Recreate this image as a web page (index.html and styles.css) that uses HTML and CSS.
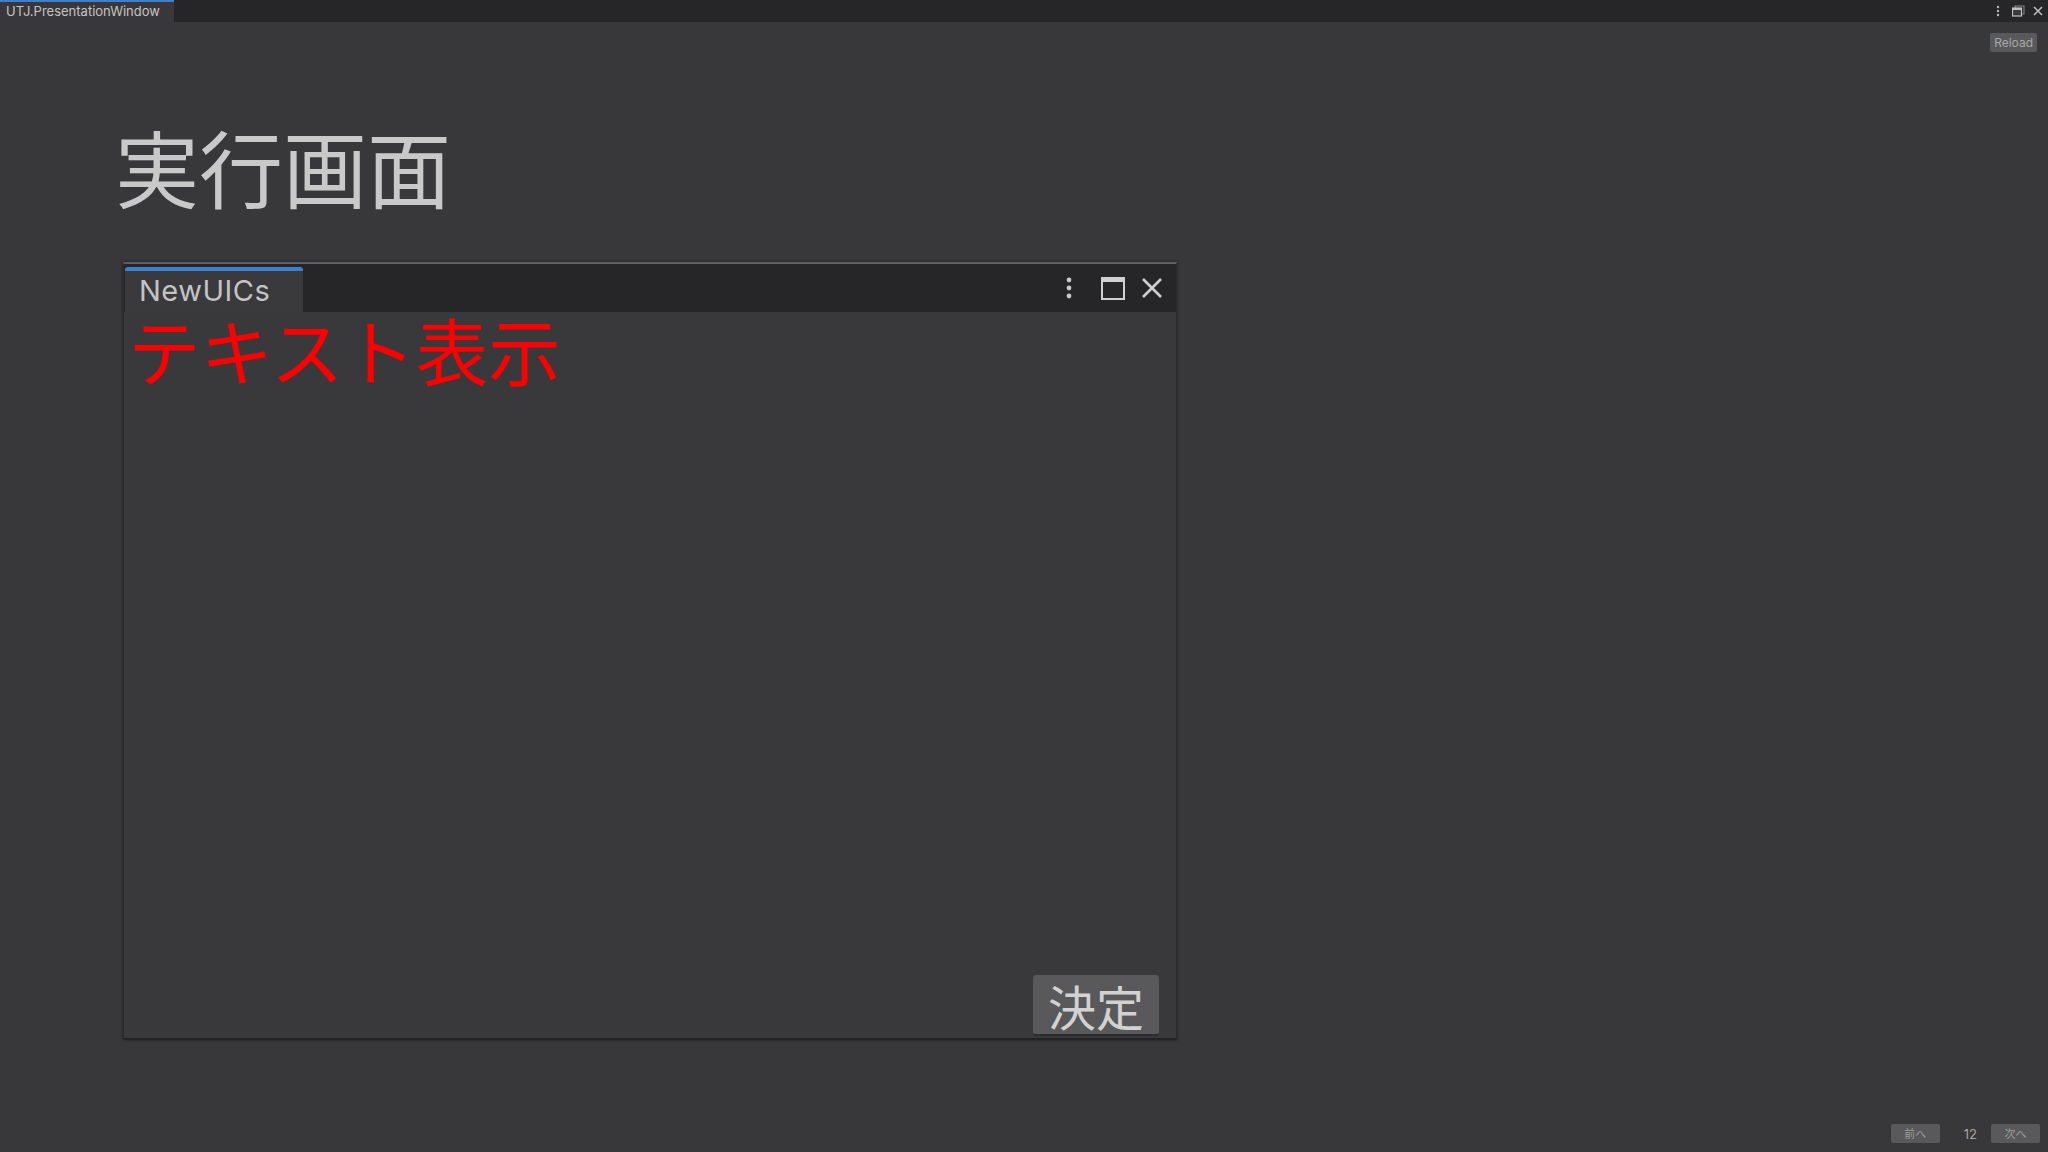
FILE: index.html
```html
<!DOCTYPE html>
<html lang="ja">
<head>
<meta charset="utf-8">
<title>UTJ.PresentationWindow</title>
<link rel="stylesheet" href="styles.css">
</head>
<body>
<div class="app">
  <div class="topbar">
    <div class="top-tab">UTJ.PresentationWindow</div>
    <div class="top-icons">
      <svg class="ico-dots" width="4" height="12" viewBox="0 0 4 12"><circle cx="2" cy="2" r="1.2" fill="#b8b8b8"/><circle cx="2" cy="6" r="1.2" fill="#b8b8b8"/><circle cx="2" cy="10" r="1.2" fill="#b8b8b8"/></svg>
      <svg class="ico-win" width="13" height="12" viewBox="0 0 13 12"><rect x="3" y="1" width="9" height="8" fill="none" stroke="#8a8a8a" stroke-width="1"/><rect x="0.5" y="3" width="9" height="8" fill="#3a3a3c" stroke="#c0c0c0" stroke-width="1.2"/><rect x="0.5" y="3" width="9" height="2" fill="#c0c0c0"/></svg>
      <svg class="ico-x" width="10" height="10" viewBox="0 0 10 10"><path d="M1 1 L9 9 M9 1 L1 9" stroke="#c0c0c0" stroke-width="1.5"/></svg>
    </div>
  </div>
  <div class="main">
    <div class="toolrow"><span class="small-btn">Reload</span></div>
    <h1 class="title">実行画面</h1>
    <div class="window">
      <div class="win-tabbar">
        <div class="win-tab">NewUICs</div>
        <div class="win-icons">
          <svg width="6" height="22" viewBox="0 0 6 22"><circle cx="3" cy="3" r="2.4" fill="#c8c8c8"/><circle cx="3" cy="11" r="2.4" fill="#c8c8c8"/><circle cx="3" cy="19" r="2.4" fill="#c8c8c8"/></svg>
          <svg width="24" height="23" viewBox="0 0 24 23"><rect x="1" y="1" width="22" height="21" fill="none" stroke="#d0d0d0" stroke-width="2"/><rect x="1" y="1" width="22" height="4" fill="#d0d0d0"/></svg>
          <svg width="22" height="22" viewBox="0 0 22 22"><path d="M2 2 L20 20 M20 2 L2 20" stroke="#d0d0d0" stroke-width="2.6"/></svg>
        </div>
      </div>
      <div class="win-body">
        <div class="red-text">テキスト表示</div>
        <button class="ok-btn">決定</button>
      </div>
    </div>
    <div class="pager">
      <span class="small-btn jp">前へ</span>
      <span class="page-num">12</span>
      <span class="small-btn jp">次へ</span>
    </div>
  </div>
</div>
</body>
</html>
```

FILE: styles.css
```css
html, body {
  margin: 0;
  padding: 0;
  background: #38383a;
  font-family: Inter, "Noto Sans", "Noto Sans CJK JP", sans-serif;
}
.app {
  width: 2048px;
  height: 1152px;
  display: flex;
  flex-direction: column;
  overflow: hidden;
}
.topbar {
  height: 22px;
  background: #262628;
  display: flex;
  align-items: stretch;
  justify-content: space-between;
  flex: none;
}
.top-tab {
  width: 168px;
  background: #38383a;
  border-top: 2px solid #3f7fd0;
  color: #c4c4c4;
  font-size: 13px;
  line-height: 19px;
  padding-left: 6px;
  white-space: nowrap;
}
.top-icons {
  display: flex;
  align-items: center;
  gap: 8px;
  padding-right: 5px;
}
.ico-dots { margin-right: 4px; }
.main {
  flex: 1;
  display: flex;
  flex-direction: column;
}
.toolrow {
  display: flex;
  justify-content: flex-end;
  padding: 11px 11px 0 0;
}
.small-btn {
  display: inline-block;
  height: 19px;
  line-height: 19px;
  padding: 0 4px;
  background: #59595b;
  color: #a8a8a8;
  font-size: 12px;
  border-radius: 2px;
  box-sizing: border-box;
}
.small-btn.jp {
  width: 49px;
  text-align: center;
  font-family: "Noto Sans CJK JP", sans-serif;
  font-size: 11px;
  color: #9c9c9c;
}
.title {
  margin: 72px 0 0 115px;
  font-family: "Noto Sans CJK JP", sans-serif;
  font-weight: 400;
  font-size: 84px;
  line-height: 84px;
  color: #c9c9c9;
  letter-spacing: 0;
}
.window {
  margin: 54px 0 0 123px;
  width: 1054px;
  height: 778px;
  box-sizing: border-box;
  border-top: 2px solid #5e5e60;
  border-bottom: 2px solid #222224;
  border-left: 1px solid #2a2a2c;
  border-right: 1px solid #2a2a2c;
  box-shadow: 0 0 3px rgba(0,0,0,0.45);
  display: flex;
  flex-direction: column;
  background: #39393b;
}
.win-tabbar {
  height: 48px;
  background: #262628;
  display: flex;
  align-items: flex-end;
  justify-content: space-between;
  flex: none;
}
.win-tab {
  margin-left: 1px;
  width: 178px;
  height: 45px;
  box-sizing: border-box;
  border-top: 4px solid #3f7fd0;
  border-radius: 3px 3px 0 0;
  background: #3a3a3c;
  color: #c4c4c4;
  font-size: 29px;
  line-height: 40px;
  padding-left: 14px;
  letter-spacing: 0.5px;
}
.win-icons {
  align-self: center;
  display: flex;
  align-items: center;
  gap: 0;
  padding-right: 13px;
}
.win-icons svg:nth-child(1) { margin-right: 29px; }
.win-icons svg:nth-child(2) { margin-right: 16px; }
.win-body {
  flex: 1;
  display: flex;
  flex-direction: column;
  padding: 1px 17px 2px 4px;
}
.red-text {
  font-family: "Noto Sans CJK JP", sans-serif;
  font-size: 72.5px;
  line-height: 72px;
  color: #ff0000;
}
.ok-btn {
  margin-top: auto;
  align-self: flex-end;
  width: 126px;
  height: 61px;
  padding: 0;
  background: #59595b;
  border: none;
  border-bottom: 2px solid #2b2b2d;
  border-radius: 3px;
  color: #d2d2d2;
  font-family: "Noto Sans CJK JP", sans-serif;
  font-size: 48px;
  line-height: 56px;
}
.pager {
  margin-top: auto;
  display: flex;
  justify-content: flex-end;
  align-items: center;
  padding: 0 8px 9px 0;
  gap: 0;
}
.page-num {
  color: #a8a8a8;
  font-size: 13px;
  margin: 0 14px 0 24px;
}
```
